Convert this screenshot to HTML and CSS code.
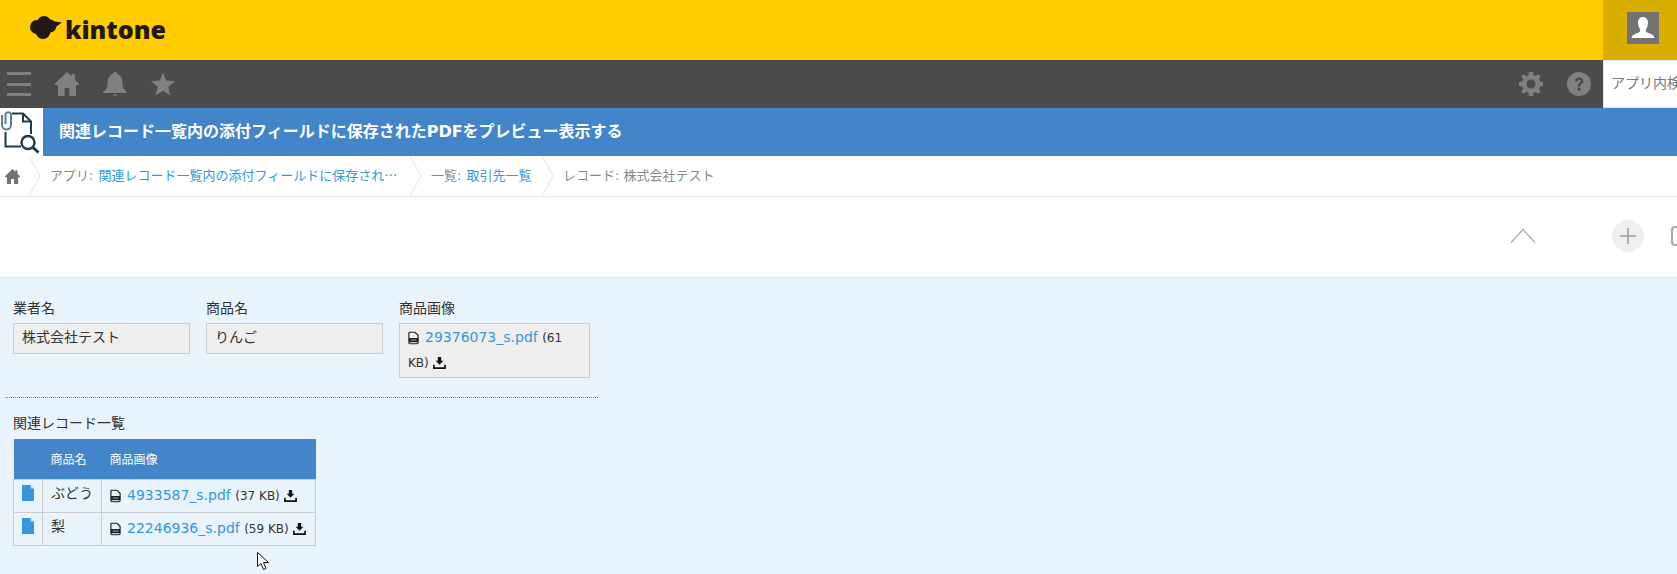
FILE: index.html
```html
<!DOCTYPE html>
<html lang="ja">
<head>
<meta charset="utf-8">
<title>kintone</title>
<link rel="stylesheet" href="styles.css">
</head>
<body>
<svg class="defs" width="0" height="0" aria-hidden="true">
  <symbol id="file" viewBox="0 0 12 14"><path d="M1.5 .7H7.6L11 4V12a1.3 1.3 0 0 1-1.3 1.3H2.3A1.3 1.3 0 0 1 1 12V1.2Z" fill="none" stroke="#222" stroke-width="1.3"/><rect x="1" y="7" width="10" height="4.6" fill="#222"/><rect x="3" y="8.5" width="6" height="1.4" fill="#888"/></symbol>
  <symbol id="dl" viewBox="0 0 14 14"><path d="M5.2 1H8.8V5.2H11.2L7 9.4 2.8 5.2H5.2Z" fill="#111"/><path d="M1 9.5V13H13V9.5" fill="none" stroke="#111" stroke-width="1.8"/></symbol>
  <symbol id="doc" viewBox="0 0 12 16"><path d="M0 0H8L12 4V16H0Z" fill="#3498db"/><path d="M8.6 0 12 3.4H8.6Z" fill="#bcdcf3"/></symbol>
  <symbol id="home" viewBox="0 0 24 24"><path d="M12 0 16.500 4.300V2H20V7.700L24 11.500V13H21V24H14.400V16H9.600V24H3V13H0V11.500Z" fill="currentColor"/></symbol>
</svg>

<header class="top">
  <div class="logo">
    <svg class="cloud" viewBox="0 0 32 23">
      <g fill="#231815">
        <circle cx="7" cy="11" r="7"/>
        <circle cx="14" cy="7" r="7"/>
        <circle cx="20" cy="10" r="6.500"/>
        <circle cx="13" cy="15.500" r="7.500"/>
        <path d="M22 5 32 6.500 24 12Z"/>
      </g>
    </svg>
    <span class="logo-text">kintone</span>
  </div>
  <div class="user">
    <span class="avatar">
      <svg viewBox="0 0 32 32" width="32" height="32"><path d="M16 5C19.5 5 21.3 8 21 11.5 20.8 14 19.8 16 18.8 17.5 18.6 19.5 19.5 20.3 21.5 21 24 22 27 23 27.5 26H4.5C5 23 8 22 10.5 21 12.5 20.3 13.4 19.5 13.2 17.5 12.2 16 11.2 14 11 11.5 10.7 8 12.5 5 16 5Z" fill="#fff"/></svg>
    </span>
  </div>
</header>

<nav class="nav">
  <div class="nav-left">
    <span class="burger"><i></i><i></i><i></i></span>
    <svg class="nav-icon" viewBox="0 0 24 24"><use href="#home"/></svg>
    <svg class="nav-icon" viewBox="0 0 24 24"><path d="M12 0C13.2 0 14 .8 14 2 18 3 19.3 6.500 19.300 10.500 19.300 15 21 18 24 20V21H0V20C3 18 4.700 15 4.700 10.500 4.700 6.500 6 3 10 2 10 .8 10.800 0 12 0ZM9.500 22.500H14.500C14 24.300 10 24.300 9.500 22.500Z" fill="currentColor"/></svg>
    <svg class="nav-icon" viewBox="0 0 24 24"><path d="M12 .5 15.200 8.600 24 9.200 17.200 14.800 19.400 23.500 12 18.800 4.600 23.500 6.800 14.800 0 9.200 8.800 8.600Z" fill="currentColor"/></svg>
  </div>
  <div class="nav-right">
    <svg class="nav-icon" viewBox="0 0 24 24"><path fill-rule="evenodd" d="M10 0H14L14.600 3.200 16.800 4.100 19.500 2.300 21.700 4.500 19.900 7.200 20.800 9.400 24 10V14L20.800 14.600 19.900 16.800 21.700 19.500 19.500 21.700 16.800 19.900 14.600 20.800 14 24H10L9.400 20.800 7.200 19.900 4.500 21.700 2.300 19.500 4.100 16.800 3.200 14.600 0 14V10L3.200 9.400 4.100 7.200 2.300 4.500 4.500 2.300 7.200 4.100 9.400 3.200ZM12 7.500A4.500 4.500 0 1 0 12 16.500 4.500 4.500 0 0 0 12 7.500Z" fill="currentColor"/></svg>
    <svg class="nav-icon" viewBox="0 0 24 24"><circle cx="12" cy="12" r="12" fill="currentColor"/><path d="M8 9.500C8 7 9.800 5.500 12.200 5.500 14.600 5.500 16.300 7 16.300 9.100 16.300 12 13.300 12 13.300 14.500H10.800C10.800 11 13.700 11 13.700 9.200 13.700 8.300 13 7.800 12.100 7.800 11.100 7.800 10.500 8.500 10.500 9.500Z" fill="#4b4b4b"/><rect x="10.600" y="15.700" width="2.900" height="2.900" fill="#4b4b4b"/></svg>
    <div class="search">アプリ内検索</div>
  </div>
</nav>

<div class="app-title">
  <div class="app-icon">
    <svg viewBox="0 0 43 48" width="43" height="48">
      <path d="M12 5.500H23L31 13.500V26M21 38.500H5.500V24" fill="none" stroke="#1f3a4d" stroke-width="2"/>
      <path d="M23 5.500V13.500H31" fill="none" stroke="#1f3a4d" stroke-width="2"/>
      <path d="M2 7V17A4.500 4.500 0 0 0 11 17V6A3 3 0 0 0 5.500 6V16" fill="none" stroke="#5d7d92" stroke-width="2"/>
      <circle cx="28" cy="34.500" r="6.500" fill="#fff" stroke="#1f3a4d" stroke-width="2.400"/>
      <path d="M33 39.500 38.500 44.500" stroke="#1f3a4d" stroke-width="3"/>
    </svg>
  </div>
  <h1 class="app-name">関連レコード一覧内の添付フィールドに保存されたPDFをプレビュー表示する</h1>
</div>

<div class="crumbs">
  <svg class="crumb-home" viewBox="0 0 24 24"><use href="#home"/></svg>
  <svg class="chev" viewBox="0 0 13 40"><path d="M1 0 12 20 1 40" fill="none" stroke="#e3e7e8" stroke-width="1"/></svg>
  <span class="crumb crumb-app">アプリ: <a>関連レコード一覧内の添付フィールドに保存され<span class="cjk">…</span></a></span>
  <svg class="chev" viewBox="0 0 13 40"><path d="M1 0 12 20 1 40" fill="none" stroke="#e3e7e8" stroke-width="1"/></svg>
  <span class="crumb crumb-list">一覧: <a>取引先一覧</a></span>
  <svg class="chev" viewBox="0 0 13 40"><path d="M1 0 12 20 1 40" fill="none" stroke="#e3e7e8" stroke-width="1"/></svg>
  <span class="crumb">レコード: 株式会社テスト</span>
</div>

<div class="toolbar">
  <svg class="chevron-up" viewBox="0 0 26 16"><path d="M1 14.500 13 1.500 25 14.500" fill="none" stroke="#a8a8a8" stroke-width="1.200"/></svg>
  <span class="plus"><svg viewBox="0 0 16 16" width="16" height="16"><path d="M8 0V16M0 8H16" stroke="#a0a0a0" stroke-width="1.600"/></svg></span>
  <span class="square"></span>
</div>

<main class="record">
  <div class="fields">
    <div class="field">
      <label class="label">業者名</label>
      <div class="value">株式会社テスト</div>
    </div>
    <div class="field">
      <label class="label">商品名</label>
      <div class="value">りんご</div>
    </div>
    <div class="field field-file">
      <label class="label">商品画像</label>
      <div class="value value-file">
        <svg class="i-file"><use href="#file"/></svg><a class="link">29376073_s.pdf</a> <span class="size">(61 KB)</span><svg class="i-dl"><use href="#dl"/></svg>
      </div>
    </div>
  </div>
  <hr class="rule">
  <div class="label sub-label">関連レコード一覧</div>
  <table class="sub">
    <thead>
      <tr><th class="c1"></th><th class="c2">商品名</th><th class="c3">商品画像</th></tr>
    </thead>
    <tbody>
      <tr class="row">
        <td class="cell-doc"><svg class="i-doc"><use href="#doc"/></svg></td>
        <td class="cell-text">ぶどう</td>
        <td class="cell-file"><svg class="i-file"><use href="#file"/></svg><a class="link">4933587_s.pdf</a> <span class="size">(37 KB)</span><svg class="i-dl"><use href="#dl"/></svg></td>
      </tr>
      <tr class="row">
        <td class="cell-doc"><svg class="i-doc"><use href="#doc"/></svg></td>
        <td class="cell-text">梨</td>
        <td class="cell-file"><svg class="i-file"><use href="#file"/></svg><a class="link">22246936_s.pdf</a> <span class="size">(59 KB)</span><svg class="i-dl"><use href="#dl"/></svg></td>
      </tr>
    </tbody>
  </table>
</main>

<svg class="cursor" viewBox="0 0 13 19" width="13" height="19"><path d="M.5.5V14.500L4 11.500 6.500 17.500 9 16.500 6.500 10.500H11.500Z" fill="#fff" stroke="#111" stroke-width="1"/></svg>
</body>
</html>
```
FILE: styles.css
```css
* { box-sizing: border-box; }
html, body { margin: 0; height: 574px; overflow: hidden; }
body {
  width: 1677px;
  background: #e8f3fc;
  color: #333;
  font-family: "DejaVu Sans", "Noto Sans CJK JP", sans-serif;
  font-size: 14px;
  position: relative;
}
.defs { position: absolute; }

.top { display: flex; justify-content: space-between; height: 60px; background: #fc0; }
.logo { display: flex; align-items: center; gap: 3px; padding-left: 30px; }
.cloud { width: 32px; height: 23px; margin-top: -5px; }
.logo-text {
  font-family: "Open Sans", sans-serif;
  font-weight: 800;
  font-size: 25px;
  line-height: 30px;
  color: #231815;
  margin-top: -2px;
}
.user { display: flex; justify-content: flex-start; width: 74px; padding: 12px 0 0 24px; background: #d9ae00; }
.avatar { width: 32px; height: 32px; background: #737373; }

.nav { display: flex; justify-content: space-between; height: 48px; background: #4b4b4b; color: #808080; }
.nav-left { display: flex; align-items: center; gap: 24px; padding-left: 7px; }
.nav-right { display: flex; align-items: center; gap: 24px; }
.nav-icon { width: 24px; height: 24px; display: block; }
.burger { display: flex; flex-direction: column; justify-content: space-between; width: 24px; height: 24px; }
.burger i { display: block; height: 3px; background: #808080; }
.search {
  width: 74px;
  height: 48px;
  margin-left: -12px;
  padding-left: 7px;
  background: #fff;
  border: 1px solid #e3e7e8;
  border-right: 0;
  color: #777;
  font-size: 14px;
  line-height: 45px;
  white-space: nowrap;
  overflow: hidden;
}

.app-title { display: flex; height: 48px; background: #4285c8; }
.app-icon { width: 43px; background: #fff; }
.app-name { margin: 0; padding-left: 16px; color: #fff; font-size: 16px; font-weight: 700; line-height: 47px; }

.crumbs {
  display: flex;
  align-items: center;
  height: 41px;
  background: #fff;
  border-bottom: 1px solid #e3e7e8;
  color: #888;
  font-size: 13px;
}
.crumb-home { width: 15px; height: 15px; margin-left: 5px; color: #737373; }
.chev { width: 13px; height: 40px; margin-left: 8px; }
.crumb { padding: 0 0 3px 9px; white-space: nowrap; }
.crumb a { color: #3498db; margin-left: 1px; }
.cjk { font-family: "Noto Sans CJK JP", sans-serif; }
.crumb-app { width: 368px; }
.crumb-list { width: 119px; }
.crumb-app + .chev, .crumb-list + .chev { margin-left: 0; }

.toolbar {
  position: relative;
  display: flex;
  align-items: center;
  height: 81px;
  padding-left: 1510px;
  background: #fff;
  border-bottom: 1px solid #dfe5ea;
}
.chevron-up { width: 26px; height: 16px; margin-top: -2px; flex: none; }
.plus {
  display: flex;
  align-items: center;
  justify-content: center;
  flex: none;
  width: 32px;
  height: 32px;
  margin-left: 76px;
  margin-top: -3px;
  border-radius: 50%;
  background: #efefef;
}
.square {
  flex: none;
  width: 20px;
  height: 20px;
  margin-left: 27px;
  margin-top: -3px;
  border: 2px solid #a8a8a8;
  border-radius: 4px;
}

.record { padding: 20px 0 0 5px; }
.fields { display: flex; gap: 16px; padding-left: 8px; }
.field { width: 177px; }
.field-file { width: 191px; }
.label { display: block; font-size: 14px; line-height: 20px; color: #333; height: 25px; }
.value {
  height: 31px;
  padding: 0 8px;
  background: #eee;
  border: 1px solid #ccc;
  font-size: 14px;
  line-height: 27px;
}
.value-file { height: 55px; line-height: 24px; padding-top: 1px; }
.link { color: #3498db; }
.size { font-size: 12px; }
.i-file { width: 11px; height: 14px; vertical-align: -3px; margin-right: 6px; }
.i-dl { width: 13px; height: 13px; vertical-align: -2px; margin-left: 4px; }
.rule {
  width: 593px;
  height: 0;
  margin: 19px 0 0;
  border: 0;
  border-top: 1px dotted #777;
}
.sub-label { margin: 15px 0 0 8px; height: 26px; }
.sub { margin-left: 8px; border-collapse: collapse; font-size: 14px; }
.sub th {
  height: 40px;
  padding: 0 8px;
  background: #4285c8;
  color: #fff;
  font-size: 12px;
  font-weight: 400;
  text-align: left;
}
.c1 { width: 29px; }
.c2 { width: 59px; }
.c3 { width: 214px; }
.sub td { height: 33px; padding: 0 8px; border: 1px solid #ccc; vertical-align: middle; }
.sub .cell-doc { padding: 0 0 6px 8px; }
.sub .cell-text { padding-bottom: 8px; }
.sub .cell-file { padding-bottom: 2px; }
.i-doc { display: block; width: 12px; height: 16px; }
.cell-file { font-size: 14px; white-space: nowrap; }

.cursor { position: absolute; left: 257px; top: 552px; }
```
